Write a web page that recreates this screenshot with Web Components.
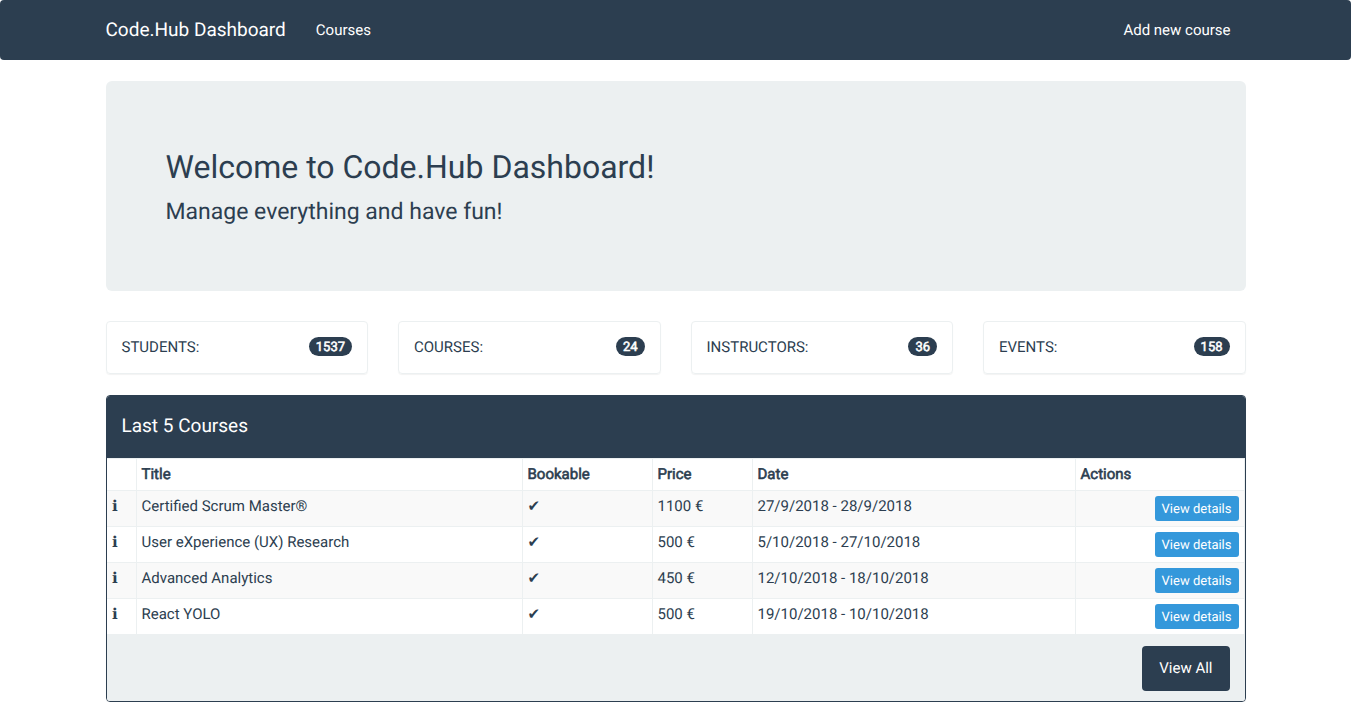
<!DOCTYPE html>
<html lang="en">
<head>
<meta charset="utf-8">
<title>Code.Hub Dashboard</title>
<style>
body{margin:0;background:#fff;color:#2c3e50;font:15px/1.42857143 Roboto,"Liberation Sans",sans-serif;text-rendering:geometricPrecision}
</style>
</head>
<body>
<hub-app></hub-app>
<script>
const define = (name, html) => customElements.define(name, class extends HTMLElement {
  constructor() {
    super();
    this.attachShadow({ mode: "open" }).innerHTML = html;
  }
});

define("hub-navbar", `<style>
:host{display:block;background:#2c3e50;border-radius:4px;color:#fff;height:60px;margin-bottom:21px}
nav{width:1140px;height:60px;margin:0 auto;display:flex;align-items:flex-start}
.brand{font-size:19px;line-height:21px;padding-top:19px}
.links{flex:1;display:flex;justify-content:space-between;padding:20px 15px 0 30px;line-height:21px}
a{color:inherit;text-decoration:none}
</style><nav><a class="brand"><slot name="brand"></slot></a><div class="links"><a><slot name="left"></slot></a><a><slot name="right"></slot></a></div></nav>`);

define("hub-hero", `<style>
:host{display:block;box-sizing:border-box;height:210px;padding:48px 60px;margin-bottom:30px;background:#ecf0f1;border-radius:6px}
h2{font-size:32px;font-weight:400;line-height:1.1;margin:0 0 10.5px;padding-top:21px}
p{font-size:23px;line-height:1.4;margin:0}
</style><h2><slot name="title"></slot></h2><p><slot></slot></p>`);

define("hub-stat", `<style>
:host{display:flex;box-sizing:border-box;height:53px;padding:15px;border:1px solid #ecf0f1;border-radius:4px;box-shadow:0 1px 1px rgba(0,0,0,.05);justify-content:space-between;align-items:flex-start}
.badge{background:#2c3e50;color:#fff;border-radius:10px;padding:4px 7px 2px;font-size:13px;-webkit-text-stroke:.55px currentColor;line-height:13px}
</style><span><slot></slot></span><span class="badge"><slot name="count"></slot></span>`);

define("hub-button", `<style>
:host{display:inline-block;background:#2c3e50;color:#fff;border-radius:4px;padding:12px 17px;line-height:21px;white-space:nowrap}
:host([small]){background:#3498db;border-radius:3px;padding:4px 7px 2px;font-size:13px;line-height:19px;float:right}
</style><slot></slot>`);

const courses = [
  ["Certified Scrum Master®", "1100 €", "27/9/2018 - 28/9/2018"],
  ["User eXperience (UX) Research", "500 €", "5/10/2018 - 27/10/2018"],
  ["Advanced Analytics", "450 €", "12/10/2018 - 18/10/2018"],
  ["React YOLO", "500 €", "19/10/2018 - 10/10/2018"]
];

define("course-table", `<style>
:host{display:block}
table{width:100%;table-layout:fixed;border-collapse:separate;border-spacing:0}
th,td{box-sizing:border-box;text-align:left;vertical-align:top;padding:5px;height:36px;line-height:21px;border-right:1px solid #ecf0f1;border-bottom:1px solid #ecf0f1}
th{height:33px;border-top:1px solid #ecf0f1;font-weight:400;-webkit-text-stroke:.6px currentColor}
tbody tr:nth-child(odd){background:#f9f9f9}
.glyph{display:block;height:21px;font-family:"DejaVu Sans",sans-serif}
td:first-child .glyph{padding-left:.6px}
</style><table><colgroup><col style="width:30px"><col style="width:386px"><col style="width:130px"><col style="width:100px"><col style="width:323px"><col></colgroup>
<thead><tr><th></th><th>Title</th><th>Bookable</th><th>Price</th><th>Date</th><th>Actions</th></tr></thead>
<tbody>${courses.map(([title, price, date]) => `<tr>
<td><span class="glyph">ℹ</span></td>
<td>${title}</td>
<td><span class="glyph">✔</span></td>
<td>${price}</td><td>${date}</td><td><hub-button small>View details</hub-button></td></tr>`).join("")}</tbody></table>`);

define("hub-panel", `<style>
:host{display:block;box-sizing:border-box;height:307px;border:1px solid #2c3e50;border-radius:4px;box-shadow:0 1px 1px rgba(0,0,0,.05);overflow:hidden}
header{background:#2c3e50;color:#fff;height:62px;padding:19px 15px 0;font-size:19px;line-height:21px;box-sizing:border-box}
footer{display:flex;justify-content:flex-end;box-sizing:border-box;height:67px;padding:11px 15px;background:#ecf0f1}
</style><header><slot name="title"></slot></header><slot></slot><footer><slot name="footer"></slot></footer>`);

define("hub-app", `<style>
:host{display:block}
main{width:1140px;margin:0 auto}
.stats{display:grid;grid-template-columns:repeat(4,1fr);gap:30px;margin-bottom:21px}
</style>
<hub-navbar><span slot="brand">Code.Hub Dashboard</span><span slot="left">Courses</span><span slot="right">Add new course</span></hub-navbar>
<main>
<hub-hero><span slot="title">Welcome to Code.Hub Dashboard!</span>Manage everything and have fun!</hub-hero>
<div class="stats">
<hub-stat>STUDENTS:<span slot="count">1537</span></hub-stat>
<hub-stat>COURSES:<span slot="count">24</span></hub-stat>
<hub-stat>INSTRUCTORS:<span slot="count">36</span></hub-stat>
<hub-stat>EVENTS:<span slot="count">158</span></hub-stat>
</div>
<hub-panel><span slot="title">Last 5 Courses</span><course-table></course-table><hub-button slot="footer">View All</hub-button></hub-panel>
</main>`);
</script>
</body>
</html>
